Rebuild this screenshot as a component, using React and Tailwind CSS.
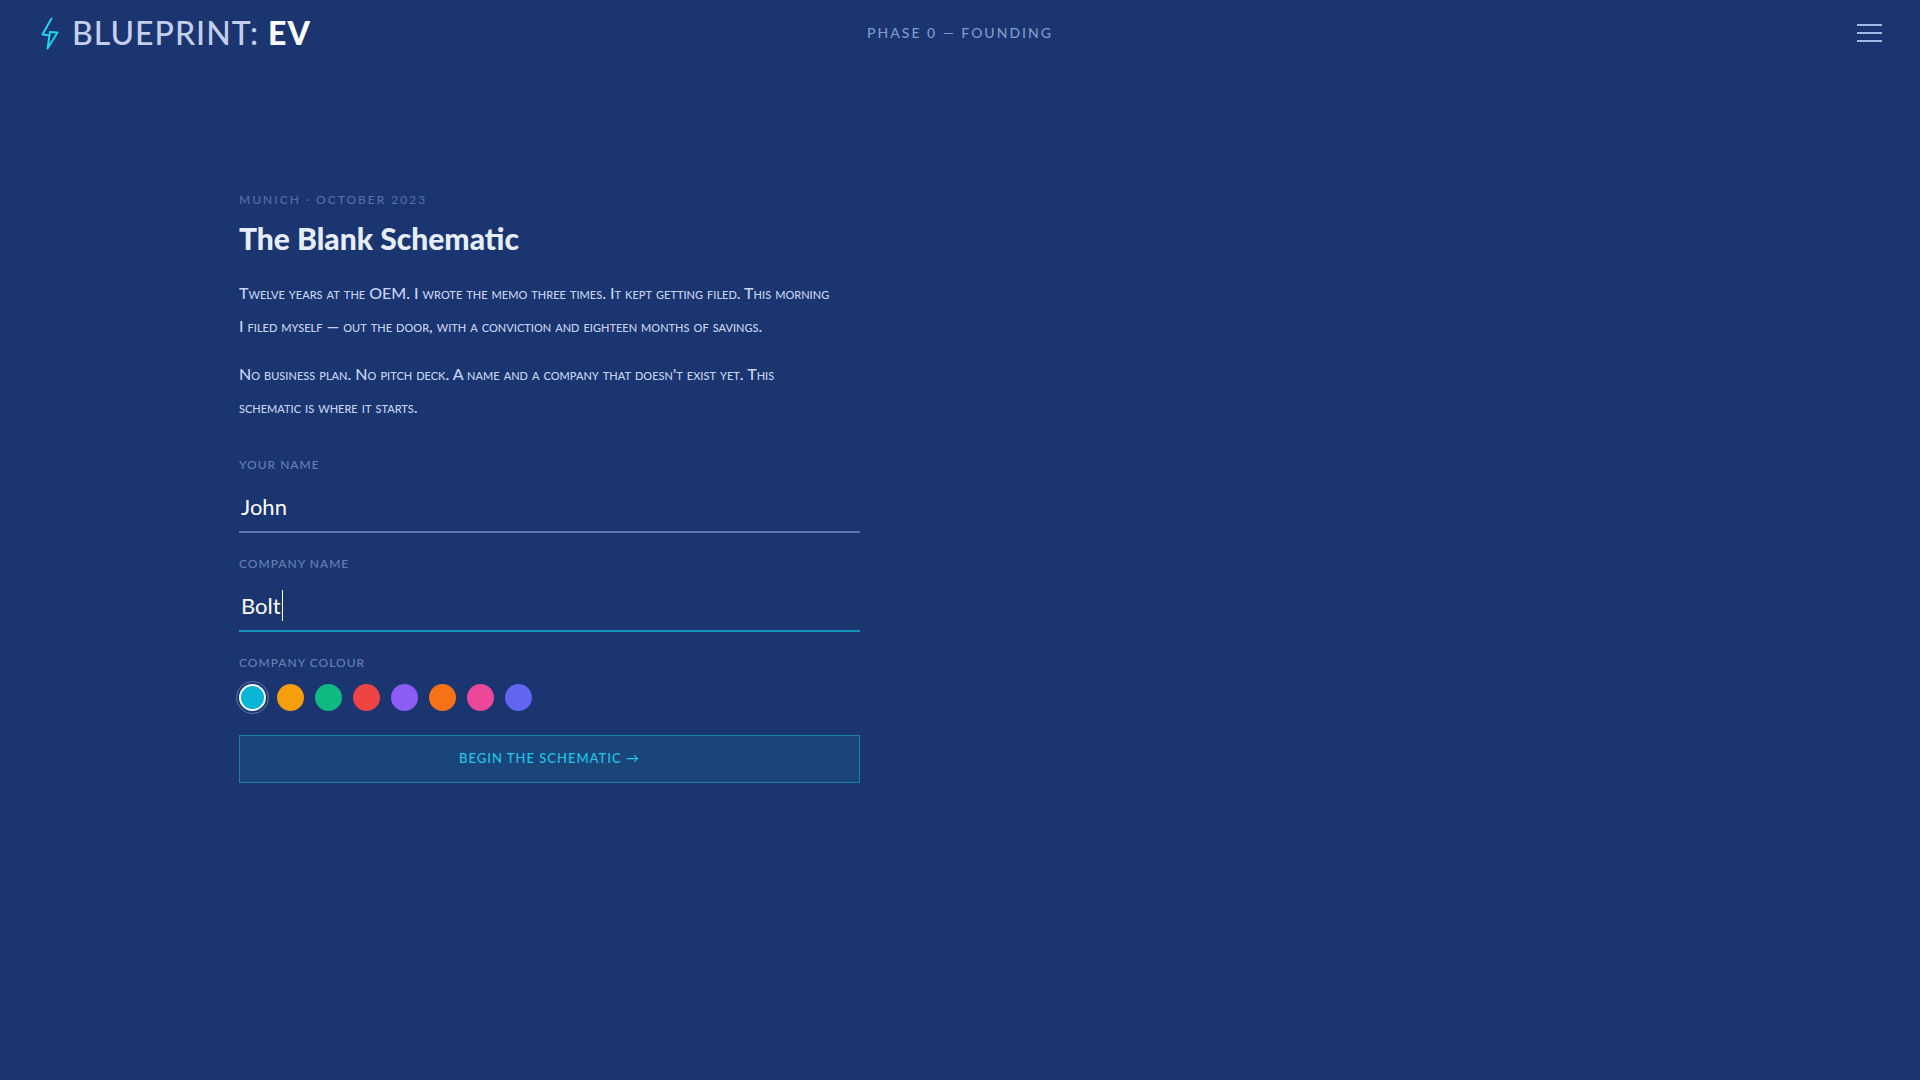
import { useState } from "react";

const COLOURS = [
  { name: "Cyan", bg: "bg-[#06b6d4]" },
  { name: "Amber", bg: "bg-[#f59e0b]" },
  { name: "Emerald", bg: "bg-[#10b981]" },
  { name: "Red", bg: "bg-[#ef4444]" },
  { name: "Violet", bg: "bg-[#8b5cf6]" },
  { name: "Orange", bg: "bg-[#f97316]" },
  { name: "Pink", bg: "bg-[#ec4899]" },
  { name: "Indigo", bg: "bg-[#6366f1]" },
];

const labelClass =
  "block font-['Lato',sans-serif] text-xs leading-5 font-medium tracking-[1px] uppercase text-[#6580b4]";

const inputClass =
  "block w-full h-[54px] px-0.5 pt-0.5 bg-transparent outline-none border-b-2 font-['Lato',sans-serif] text-[22px] text-white";

const Header = () => {
  return (
    <header className="grid grid-cols-[1fr_auto_1fr] items-center h-[66px] px-[38px]">
      {/* LOGO */}
      <a href="#" className="flex items-center gap-3">
        <svg
          className="w-[22px] h-[34px]"
          viewBox="0 0 22 34"
          fill="none"
          stroke="#22d3ee"
          strokeWidth="2"
          strokeLinejoin="round"
          strokeLinecap="round"
        >
          <path d="M13.500 2.500 L4.500 18.500 L11.500 19.500 L9.500 32.500 L19.500 16.500 L12 16 L11.500 19.500" />
        </svg>
        <span className="font-['Lato',sans-serif] text-[32px] leading-10 font-medium tracking-[1px] text-[#c3cfec]">
          BLUEPRINT: <strong className="font-black text-white">EV</strong>
        </span>
      </a>

      {/* PHASE */}
      <p className="font-['Lato',sans-serif] text-sm leading-6 font-medium tracking-[2px] uppercase text-[#7f9acb]">
        Phase 0 — Founding
      </p>

      {/* MENU */}
      <button
        type="button"
        aria-label="Menu"
        className="justify-self-end flex flex-col gap-1.5 cursor-pointer"
      >
        <span className="w-[25px] h-0.5 bg-[#9fb9e8]" />
        <span className="w-[25px] h-0.5 bg-[#9fb9e8]" />
        <span className="w-[25px] h-0.5 bg-[#9fb9e8]" />
      </button>
    </header>
  );
};

const FoundingForm = () => {
  const [name, setName] = useState("John");
  const [company, setCompany] = useState("Bolt");
  const [colour, setColour] = useState("Cyan");

  return (
    <form
      className="w-full max-w-[621px]"
      onSubmit={(e) => e.preventDefault()}
    >
      {/* YOUR NAME */}
      <label htmlFor="founder" className={labelClass}>
        Your name
      </label>
      <input
        id="founder"
        value={name}
        onChange={(e) => setName(e.target.value)}
        className={`${inputClass} mt-1 border-[#5c76b2]`}
      />

      {/* COMPANY NAME */}
      <label htmlFor="company" className={`${labelClass} mt-[21px]`}>
        Company name
      </label>
      <div className="relative mt-1">
        <input
          id="company"
          value={company}
          onChange={(e) => setCompany(e.target.value)}
          className={`${inputClass} border-[#1593b8] caret-transparent`}
        />
        {/* text cursor */}
        <span className="absolute left-[43px] top-3 w-px h-[31px] bg-white" />
      </div>

      {/* COMPANY COLOUR */}
      <fieldset className="mt-[21px]">
        <legend className={labelClass}>Company colour</legend>
        <div className="flex gap-[11px] mt-[11px]">
          {COLOURS.map((item) => (
            <input
              key={item.name}
              type="radio"
              name="colour"
              aria-label={item.name}
              checked={colour === item.name}
              onChange={() => setColour(item.name)}
              className={`appearance-none w-[27px] h-[27px] rounded-full cursor-pointer checked:border-2 checked:border-white checked:outline checked:outline-offset-2 checked:outline-[#6078b0] ${item.bg}`}
            />
          ))}
        </div>
      </fieldset>

      {/* SUBMIT */}
      <button
        type="submit"
        className="w-full h-12 mt-6 border border-[#1c7ea8] bg-[#19457b] font-['Lato',sans-serif] text-[13px] font-medium tracking-[1px] uppercase text-[#22c5e3] cursor-pointer"
      >
        Begin the schematic →
      </button>
    </form>
  );
};

export default function App() {
  return (
    <div className="min-h-screen bg-[#1b3570]">
      <Header />

      <main className="mx-auto w-full max-w-[1442px] pt-[124px] pb-16">
        <p className="font-['Lato',sans-serif] text-xs leading-5 font-medium tracking-[2px] uppercase text-[#5570a8]">
          Munich · October 2023
        </p>
        <h1 className="mt-2 font-['Lato',sans-serif] text-[30px] leading-10 font-black text-[#e6eefc]">
          The Blank Schematic
        </h1>

        {/* STORY */}
        <div className="w-full max-w-[621px] mt-[18px] mb-8 space-y-[15px] font-['Lato',sans-serif] text-base leading-[33px] font-medium [font-variant-caps:small-caps] text-[#c6d4f2]">
          <p>
            Twelve years at the OEM. I wrote the memo three times. It kept
            getting filed. This morning
            <br />I filed myself — out the door, with a conviction and eighteen
            months of savings.
          </p>
          <p>
            No business plan. No pitch deck. A name and a company that doesn't
            exist yet. This
            <br />
            schematic is where it starts.
          </p>
        </div>

        <FoundingForm />
      </main>
    </div>
  );
}
